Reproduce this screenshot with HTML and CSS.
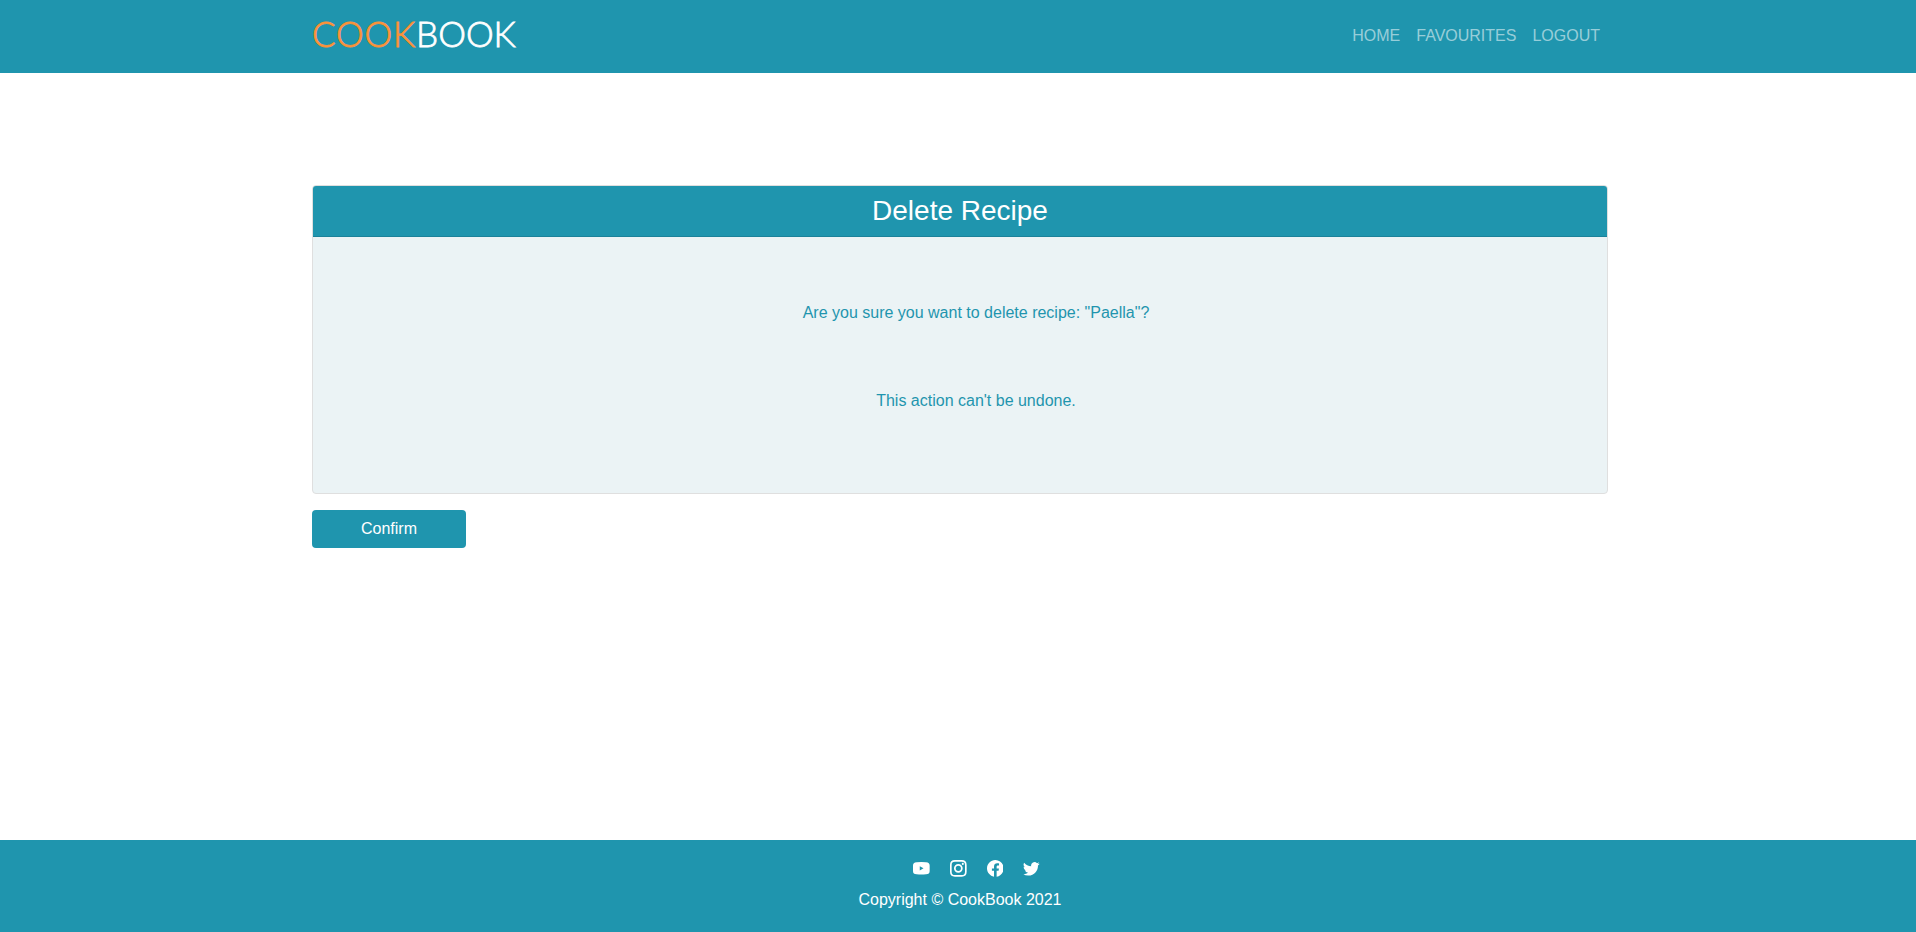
FILE: index.html
```html
<!DOCTYPE html>
<html lang="en">
<head>
<meta charset="utf-8">
<title>CookBook</title>
<link rel="stylesheet" href="styles.css">
</head>
<body>
<header class="navbar">
  <div class="container navbar-inner">
    <a class="brand"><span class="brand-accent">COOK</span>BOOK</a>
    <nav class="nav-links"><a>HOME</a><a>FAVOURITES</a><a>LOGOUT</a></nav>
  </div>
</header>
<main class="container content">
  <section class="card">
    <h1 class="card-header">Delete Recipe</h1>
    <div class="card-body">
      <p>Are you sure you want to delete recipe: "Paella"?</p>
      <p>This action can't be undone.</p>
    </div>
  </section>
  <button class="btn">Confirm</button>
</main>
<footer class="footer">
  <div class="social">
    <svg viewBox="0 0 16 16"><path fill-rule="evenodd" d="M3.500 2.200Q8 1.800 12.500 2.200C15 2.300 16 3.300 16 5.400v5.200c0 2.100-1 3.100-3.500 3.200Q8 14.200 3.500 13.800C1 13.700 0 12.700 0 10.600V5.400c0-2.100 1-3.100 3.500-3.200zM6.500 6v4L10.100 8z"/></svg>
    <svg viewBox="0 0 16 16"><path fill-rule="evenodd" d="M4.700 0h6.600C14.400 0 16 1.600 16 4.700v6.600c0 3.100-1.600 4.700-4.700 4.700H4.700C1.600 16 0 14.400 0 11.300V4.700C0 1.600 1.600 0 4.700 0zm.1 1.600c-2.300 0-3.200.9-3.200 3.200v6.400c0 2.300.9 3.200 3.200 3.200h6.400c2.300 0 3.200-.9 3.200-3.200V4.800c0-2.300-.9-3.200-3.200-3.200zM8 3.800a4.200 4.200 0 1 1 0 8.400 4.200 4.200 0 0 1 0-8.400zm0 1.700a2.500 2.500 0 1 0 0 5 2.500 2.500 0 0 0 0-5z"/><circle cx="12.27" cy="3.730" r="1"/></svg>
    <svg viewBox="0 0 16 16"><path d="M16 8.049c0-4.446-3.582-8.050-8-8.050C3.580 0-.002 3.603-.002 8.050c0 4.017 2.926 7.347 6.750 7.951v-5.625h-2.030V8.050H6.750V6.275c0-2.017 1.195-3.131 3.022-3.131.876 0 1.791.157 1.791.157v1.980h-1.009c-.993 0-1.303.621-1.303 1.258v1.510h2.218l-.354 2.326H9.250V16c3.824-.604 6.750-3.934 6.750-7.951z"/></svg>
    <svg viewBox="0 0 16 16"><path d="M5.026 15c6.038 0 9.341-5.003 9.341-9.334 0-.140 0-.282-.006-.422A6.685 6.685 0 0 0 16 3.542a6.658 6.658 0 0 1-1.889.518 3.301 3.301 0 0 0 1.447-1.817 6.533 6.533 0 0 1-2.087.793A3.286 3.286 0 0 0 7.875 6.030a9.325 9.325 0 0 1-6.767-3.429 3.289 3.289 0 0 0 1.018 4.382A3.323 3.323 0 0 1 .640 6.575v.045a3.288 3.288 0 0 0 2.632 3.218 3.203 3.203 0 0 1-.865.115 3.230 3.230 0 0 1-.614-.057 3.283 3.283 0 0 0 3.067 2.277A6.588 6.588 0 0 1 .780 13.580a6.320 6.320 0 0 1-.780-.045A9.344 9.344 0 0 0 5.026 15z"/></svg>
  </div>
  <p class="copyright">Copyright © CookBook 2021</p>
</footer>
</body>
</html>
```
FILE: styles.css
```css
* { box-sizing: border-box; }
body {
  margin: 0;
  min-height: 932px;
  display: flex;
  flex-direction: column;
  font: 16px/24px "Liberation Sans", Arial, sans-serif;
  background: #fff;
}
h1, p { margin: 0; font-weight: 400; }
.container { width: 1296px; margin-left: 312px; }
.navbar { height: 73px; background: #1f95ae; }
.navbar-inner { display: flex; justify-content: space-between; }
.brand {
  padding: 11px 0 0;
  font: 300 35px/44px Lato, sans-serif;
  letter-spacing: 0;
  color: #fff;
  -webkit-text-stroke: .8px currentColor;
}
.brand-accent { color: #fd9238; letter-spacing: .8px; }
.nav-links { display: flex; gap: 16px; padding: 24px 8px 0 0; color: rgba(255, 255, 255, .55); }
.content { flex: 1; padding-top: 112px; }
.card {
  height: 309px;
  border: 1px solid #dfdfdf;
  border-radius: 4px;
  background: #ebf3f5;
  overflow: hidden;
}
.card-header {
  height: 51px;
  padding-top: 8px;
  border-bottom: 1px solid #1b829a;
  background: #1f95ae;
  color: #fff;
  font-size: 28px;
  line-height: 34px;
  text-align: center;
}
.card-body {
  display: flex;
  flex-direction: column;
  gap: 64px;
  padding: 64px 0 0 32px;
  color: #1f95ae;
  text-align: center;
}
.btn {
  display: block;
  width: 154px;
  height: 38px;
  margin-top: 16px;
  padding: 0;
  border: 0;
  border-radius: 4px;
  background: #1f95ae;
  color: #fff;
  font: inherit;
}
.footer { height: 92px; padding: 20px 0 0 4px; background: #1f95ae; color: #fff; text-align: center; }
.social { display: flex; justify-content: center; gap: 20px; padding-left: 33px; }
.social svg { width: 16.67px; height: 16.67px; fill: #fff; }
.copyright { padding-top: 11px; }
```
